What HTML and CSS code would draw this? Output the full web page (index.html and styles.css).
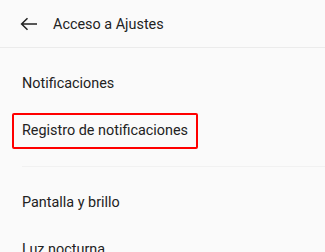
FILE: index.html
```html
<!DOCTYPE html>
<html lang="es">
<head>
<meta charset="utf-8">
<link rel="stylesheet" href="styles.css">
</head>
<body>
<div class="screen">
  <header class="topbar">
    <svg class="back" width="18" height="14" viewBox="0 0 18 14" aria-hidden="true">
      <path d="M17 7H2M7.5 1.2L1.6 7l5.9 5.8" fill="none" stroke="#222" stroke-width="1.5" stroke-linecap="butt" stroke-linejoin="miter"/>
    </svg>
    <span class="title">Acceso a Ajustes</span>
  </header>
  <section class="group">
    <div class="row">Notificaciones</div>
    <div class="row"><span class="mark">Registro de notificaciones</span></div>
  </section>
  <div class="divider"></div>
  <section class="group">
    <div class="row">Pantalla y brillo</div>
    <div class="row">Luz nocturna</div>
  </section>
</div>
</body>
</html>
```
FILE: styles.css
```css
html, body {
  margin: 0;
  padding: 0;
  background: #fafafa;
}
body {
  font-family: Roboto, "Noto Sans", sans-serif;
  color: #222222;
  width: 325px;
  height: 252px;
  overflow: hidden;
}
.topbar {
  height: 47px;
  display: flex;
  align-items: center;
  padding-left: 20px;
  border-bottom: 1px solid #ebebeb;
  box-sizing: content-box;
}
.back {
  display: block;
  margin-top: 1px;
}
.title {
  margin-left: 15px;
  font-size: 14.4px;
  margin-top: 1px;
}
.group {
  padding: 12px 0 12px;
}
.row {
  height: 47px;
  display: flex;
  align-items: center;
  padding-left: 22px;
  font-size: 14.4px;
}
.mark {
  border: 2px solid #ff0000;
  border-radius: 2px;
  padding: 7px 8px 8px;
  margin-left: -10px;
}
.divider {
  height: 1px;
  margin-left: 22px;
  background: #f1f1f1;
}
```
